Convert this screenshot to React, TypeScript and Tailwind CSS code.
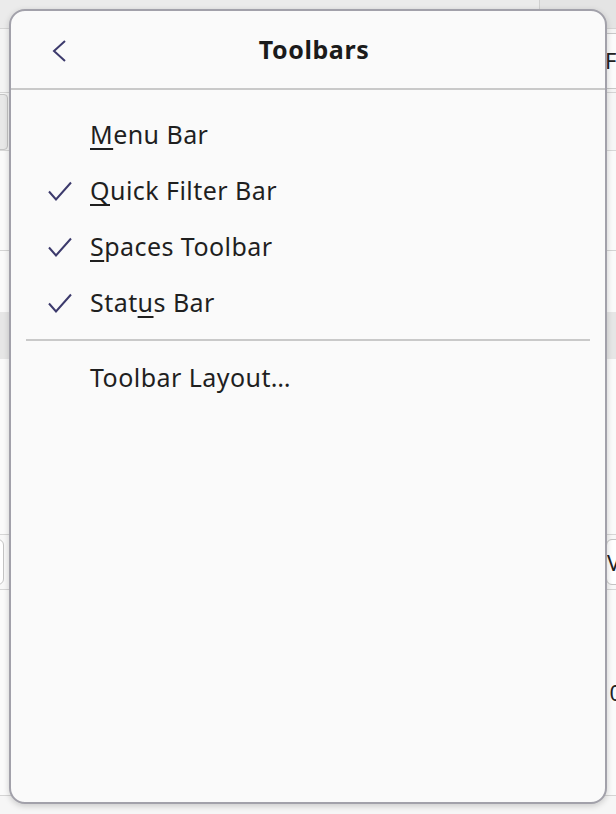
type Item = {
  label: string;
  key: number; // index of the access-key letter
  checked: boolean;
};

const ITEMS: Item[] = [
  { label: "Menu Bar", key: 0, checked: false },
  { label: "Quick Filter Bar", key: 0, checked: true },
  { label: "Spaces Toolbar", key: 0, checked: true },
  { label: "Status Bar", key: 4, checked: true },
];

function Label({ text, at }: { text: string; at: number }) {
  return (
    <span>
      {text.slice(0, at)}
      <span className="underline decoration-2 underline-offset-[4px]">{text[at]}</span>
      {text.slice(at + 1)}
    </span>
  );
}

function CheckMark() {
  return (
    <svg width="24" height="20" viewBox="0 0 24 20" fill="none" className="text-[#3c3a6c]">
      <path d="M1 10.5 L8 18.5 L23 1.5" stroke="currentColor" strokeWidth="2" strokeLinejoin="miter" />
    </svg>
  );
}

function BackArrow() {
  return (
    <svg width="16" height="24" viewBox="0 0 16 24" fill="none" className="text-[#3c3a6c]">
      <path d="M14 2 L3 12 L14 22" stroke="currentColor" strokeWidth="2" />
    </svg>
  );
}

function Backdrop() {
  // what peeks out from behind the popup
  return (
    <div className="flex h-[814px] w-[616px] flex-col bg-[#f6f6f6]">
      <div className="flex h-[29px] shrink-0 border-b border-[#d4d4d4] bg-[#ebebeb]">
        <div className="flex-1" />
        <div className="w-[77px] border-l border-[#d0d0d0] bg-[#e4e4e4]" />
      </div>
      <div className="flex h-[64px] shrink-0 items-center justify-end border-b border-[#d4d4d4] bg-[#f4f4f4]">
        <div className="mr-[-6px] flex h-[56px] w-[20px] items-center rounded-l border border-[#c8c8c8] bg-[#fbfbfb] pl-[2px] text-[22px] text-[#222]">
          Fi
        </div>
      </div>
      <div className="flex h-[58px] shrink-0 items-center border-b border-[#d8d8d8]">
        <div className="ml-[-4px] h-[56px] w-[12px] rounded-r border border-[#c4c4c4] bg-[#e8e8e8]" />
      </div>
      <div className="h-[100px] shrink-0 border-b border-[#d4d4d4] bg-[#fafafa]" />
      <div className="h-[61px] shrink-0 bg-[#fafafa]" />
      <div className="h-[47px] shrink-0 bg-[#e6e6e6]" />
      <div className="h-[176px] shrink-0 border-b border-[#d6d6d6] bg-[#fafafa]" />
      <div className="flex h-[55px] shrink-0 items-center justify-between border-b border-[#d6d6d6] bg-[#f8f8f8]">
        <div className="ml-[-6px] h-[46px] w-[10px] rounded-r-md border border-[#c4c4c4] bg-white" />
        <div className="mr-[-10px] flex h-[46px] w-[20px] items-center rounded-l-md border border-[#c4c4c4] bg-white text-[22px] text-[#222]">
          V
        </div>
      </div>
      <div className="flex h-[206px] shrink-0 items-start justify-end border-b border-[#d4d4d4] bg-[#fafafa] pt-[86px]">
        <span className="mr-[-6px] text-[22px] text-[#222]">0</span>
      </div>
      <div className="flex-1 bg-[#f6f6f6]" />
    </div>
  );
}

export default function App() {
  return (
    <div
      className="relative h-[814px] w-[616px] overflow-hidden"
      style={{ fontFamily: '"Noto Sans", "Open Sans", sans-serif' }}
    >
      <Backdrop />

      <div className="absolute left-[9px] top-[9px] flex h-[795px] w-[598px] flex-col rounded-[16px] border-2 border-[#a2a1aa] bg-[#fafafa] shadow-[0_2px_6px_rgba(0,0,0,0.18)]">
        <header className="relative flex h-[79px] shrink-0 items-center justify-center border-b-2 border-[#c9c9c9]">
          <div className="absolute left-[40px] top-[28px]">
            <BackArrow />
          </div>
          <h2 className="pl-[12px] text-[25px] font-bold tracking-[0.6px] text-[#1b1b1b]">Toolbars</h2>
        </header>

        <ul className="pt-[17px]">
          {ITEMS.map((it) => (
            <li
              key={it.label}
              className="flex h-[56px] items-center text-[25px] tracking-[0.45px] text-[#1f1f1f]"
            >
              <div className="flex w-[79px] shrink-0 pl-[37px]">
                {it.checked && <CheckMark />}
              </div>
              <Label text={it.label} at={it.key} />
            </li>
          ))}
        </ul>

        <div className="mx-[15px] mt-[8px] h-[2px] bg-[#c9c9c9]" />

        <div className="flex h-[74px] items-center pl-[79px] text-[25px] tracking-[0.45px] text-[#1f1f1f]">
          Toolbar Layout…
        </div>
      </div>
    </div>
  );
}
